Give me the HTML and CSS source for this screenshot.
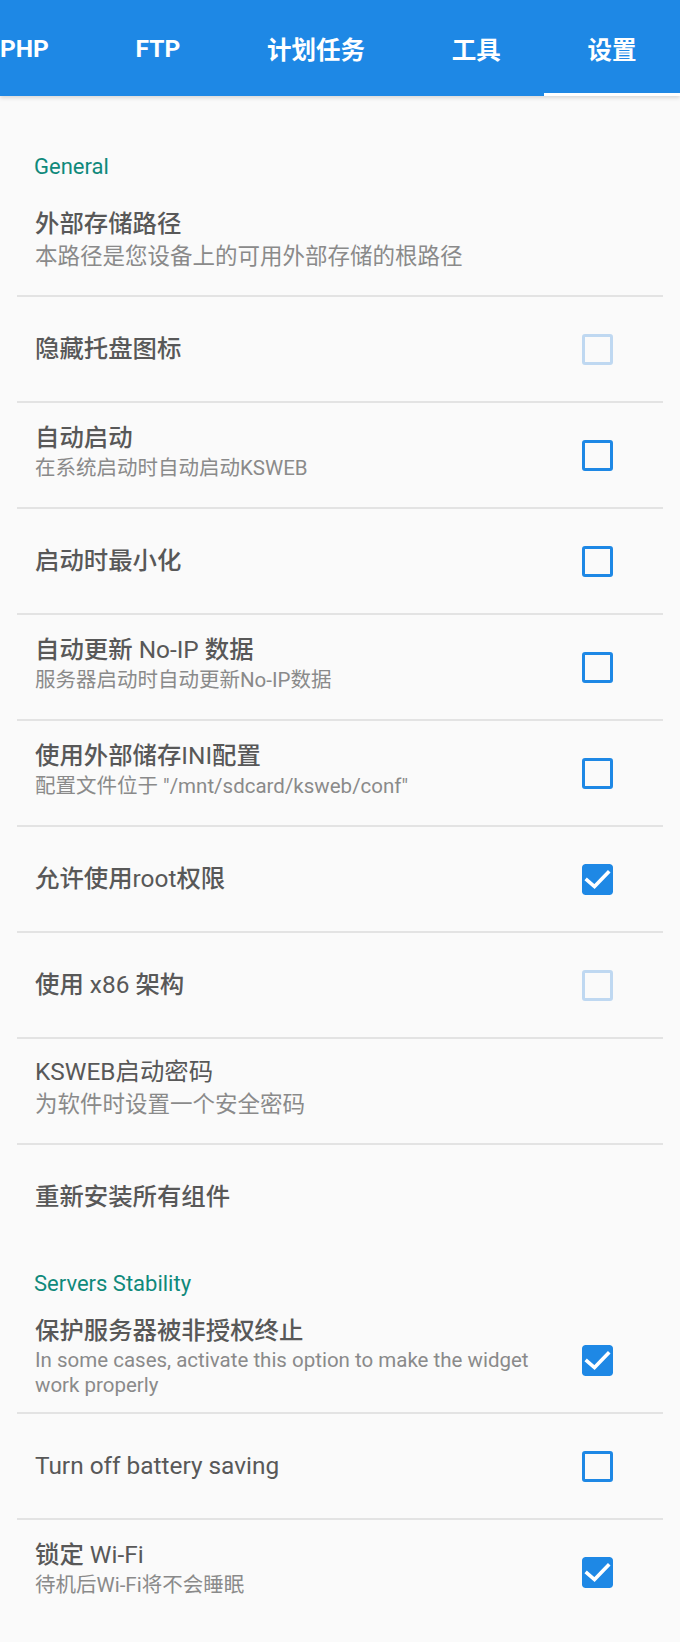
FILE: index.html
```html
<!DOCTYPE html>
<html lang="zh-CN">
<head>
    <meta charset="UTF-8">
    <meta name="viewport" content="width=device-width, initial-scale=1.0">
    <title>KSWEB 设置</title>
    <link rel="stylesheet" href="styles.css">
</head>
<body>
    <nav class="tabs">
        <div class="tab">PHP</div>
        <div class="tab">FTP</div>
        <div class="tab">计划任务</div>
        <div class="tab">工具</div>
        <div class="tab active">设置</div>
    </nav>

    <main class="settings">
        <section class="group">
            <h3 class="category">General</h3>

            <div class="pref">
                <div class="pref-text">
                    <div class="title">外部存储路径</div>
                    <div class="summary wide">本路径是您设备上的可用外部存储的根路径</div>
                </div>
            </div>

            <div class="pref">
                <div class="pref-text">
                    <div class="title">隐藏托盘图标</div>
                </div>
                <span class="check off"></span>
            </div>

            <div class="pref">
                <div class="pref-text">
                    <div class="title">自动启动</div>
                    <div class="summary">在系统启动时自动启动KSWEB</div>
                </div>
                <span class="check"></span>
            </div>

            <div class="pref">
                <div class="pref-text">
                    <div class="title">启动时最小化</div>
                </div>
                <span class="check"></span>
            </div>

            <div class="pref">
                <div class="pref-text">
                    <div class="title">自动更新 <span class="lat">No-IP</span> 数据</div>
                    <div class="summary">服务器启动时自动更新No-IP数据</div>
                </div>
                <span class="check"></span>
            </div>

            <div class="pref">
                <div class="pref-text">
                    <div class="title">使用外部储存<span class="lat">INI</span>配置</div>
                    <div class="summary">配置文件位于 "/mnt/sdcard/ksweb/conf"</div>
                </div>
                <span class="check"></span>
            </div>

            <div class="pref">
                <div class="pref-text">
                    <div class="title">允许使用<span class="lat">root</span>权限</div>
                </div>
                <svg class="check on" viewBox="0 0 31 31"><rect width="31" height="31" rx="3.5"/><path d="M5 16l7.5 6.5L26 8.5"/></svg>
            </div>

            <div class="pref">
                <div class="pref-text">
                    <div class="title">使用 <span class="lat">x86</span> 架构</div>
                </div>
                <span class="check off"></span>
            </div>

            <div class="pref">
                <div class="pref-text">
                    <div class="title plain">KSWEB启动密码</div>
                    <div class="summary wide">为软件时设置一个安全密码</div>
                </div>
            </div>

            <div class="pref">
                <div class="pref-text">
                    <div class="title">重新安装所有组件</div>
                </div>
            </div>
        </section>

        <section class="group">
            <h3 class="category">Servers Stability</h3>

            <div class="pref">
                <div class="pref-text">
                    <div class="title">保护服务器被非授权终止</div>
                    <div class="summary en">In some cases, activate this option to make the widget work properly</div>
                </div>
                <svg class="check on" viewBox="0 0 31 31"><rect width="31" height="31" rx="3.5"/><path d="M5 16l7.5 6.5L26 8.5"/></svg>
            </div>

            <div class="pref">
                <div class="pref-text">
                    <div class="title plain">Turn off battery saving</div>
                </div>
                <span class="check"></span>
            </div>

            <div class="pref">
                <div class="pref-text">
                    <div class="title">锁定 <span class="lat">Wi-Fi</span></div>
                    <div class="summary">待机后Wi-Fi将不会睡眠</div>
                </div>
                <svg class="check on" viewBox="0 0 31 31"><rect width="31" height="31" rx="3.5"/><path d="M5 16l7.5 6.5L26 8.5"/></svg>
            </div>
        </section>
    </main>
</body>
</html>
```

FILE: styles.css
```css
* {
    box-sizing: border-box;
}

body {
    margin: 0;
    background: #fafafa;
    font-family: Roboto, "Noto Sans CJK SC", sans-serif;
    color: #585858;
}

/* 顶部标签栏，向左滚动了一段 */
.tabs {
    position: relative;
    z-index: 1;
    display: flex;
    justify-content: flex-end;
    height: 96px;
    overflow: hidden;
    background: #1e88e5;
    box-shadow: 0 2px 4px rgba(0, 0, 0, 0.14);
}

.tab {
    flex-shrink: 0;
    display: flex;
    align-items: center;
    padding: 0 43.4px;
    color: #fff;
    font-size: 24.5px;
    font-weight: 700;
    white-space: nowrap;
}

.tab.active {
    box-shadow: inset 0 -3px 0 #fff;
}

.settings {
    padding-top: 36px;
}

.category {
    margin: 0;
    padding: 20px 34px 9px;
    color: #0f897b;
    font-size: 22px;
    font-weight: 400;
    line-height: 30px;
}

.pref {
    box-sizing: content-box;
    display: flex;
    align-items: center;
    gap: 24px;
    min-height: 104px;
    margin: 0 17px;
    padding: 0 50px 0 18px;
    border-bottom: 2px solid #e3e3e3;
}

.pref:last-child {
    border-bottom: 0;
}

.pref-text {
    flex: 1;
    min-width: 0;
}

.title {
    font-size: 24.4px;
    font-weight: 500;
    line-height: 34px;
}

.title.plain,
.title .lat {
    font-weight: 400;
}

.summary {
    margin-bottom: 8px;
    color: #8a8a8a;
    font-size: 20.5px;
    line-height: 27px;
}

.summary.wide {
    font-size: 22.5px;
    line-height: 30px;
}

.summary.en {
    line-height: 25px;
}

/* 复选框 */
.check {
    flex-shrink: 0;
    width: 31px;
    height: 31px;
    border: 3.3px solid #1e88e5;
    border-radius: 3px;
}

.check.off {
    border-color: #bfd8f1;
}

.check.on {
    border: 0;
}

.check.on rect {
    fill: #1e88e5;
}

.check.on path {
    fill: none;
    stroke: #fff;
    stroke-width: 3.6;
    stroke-linecap: square;
}
```
